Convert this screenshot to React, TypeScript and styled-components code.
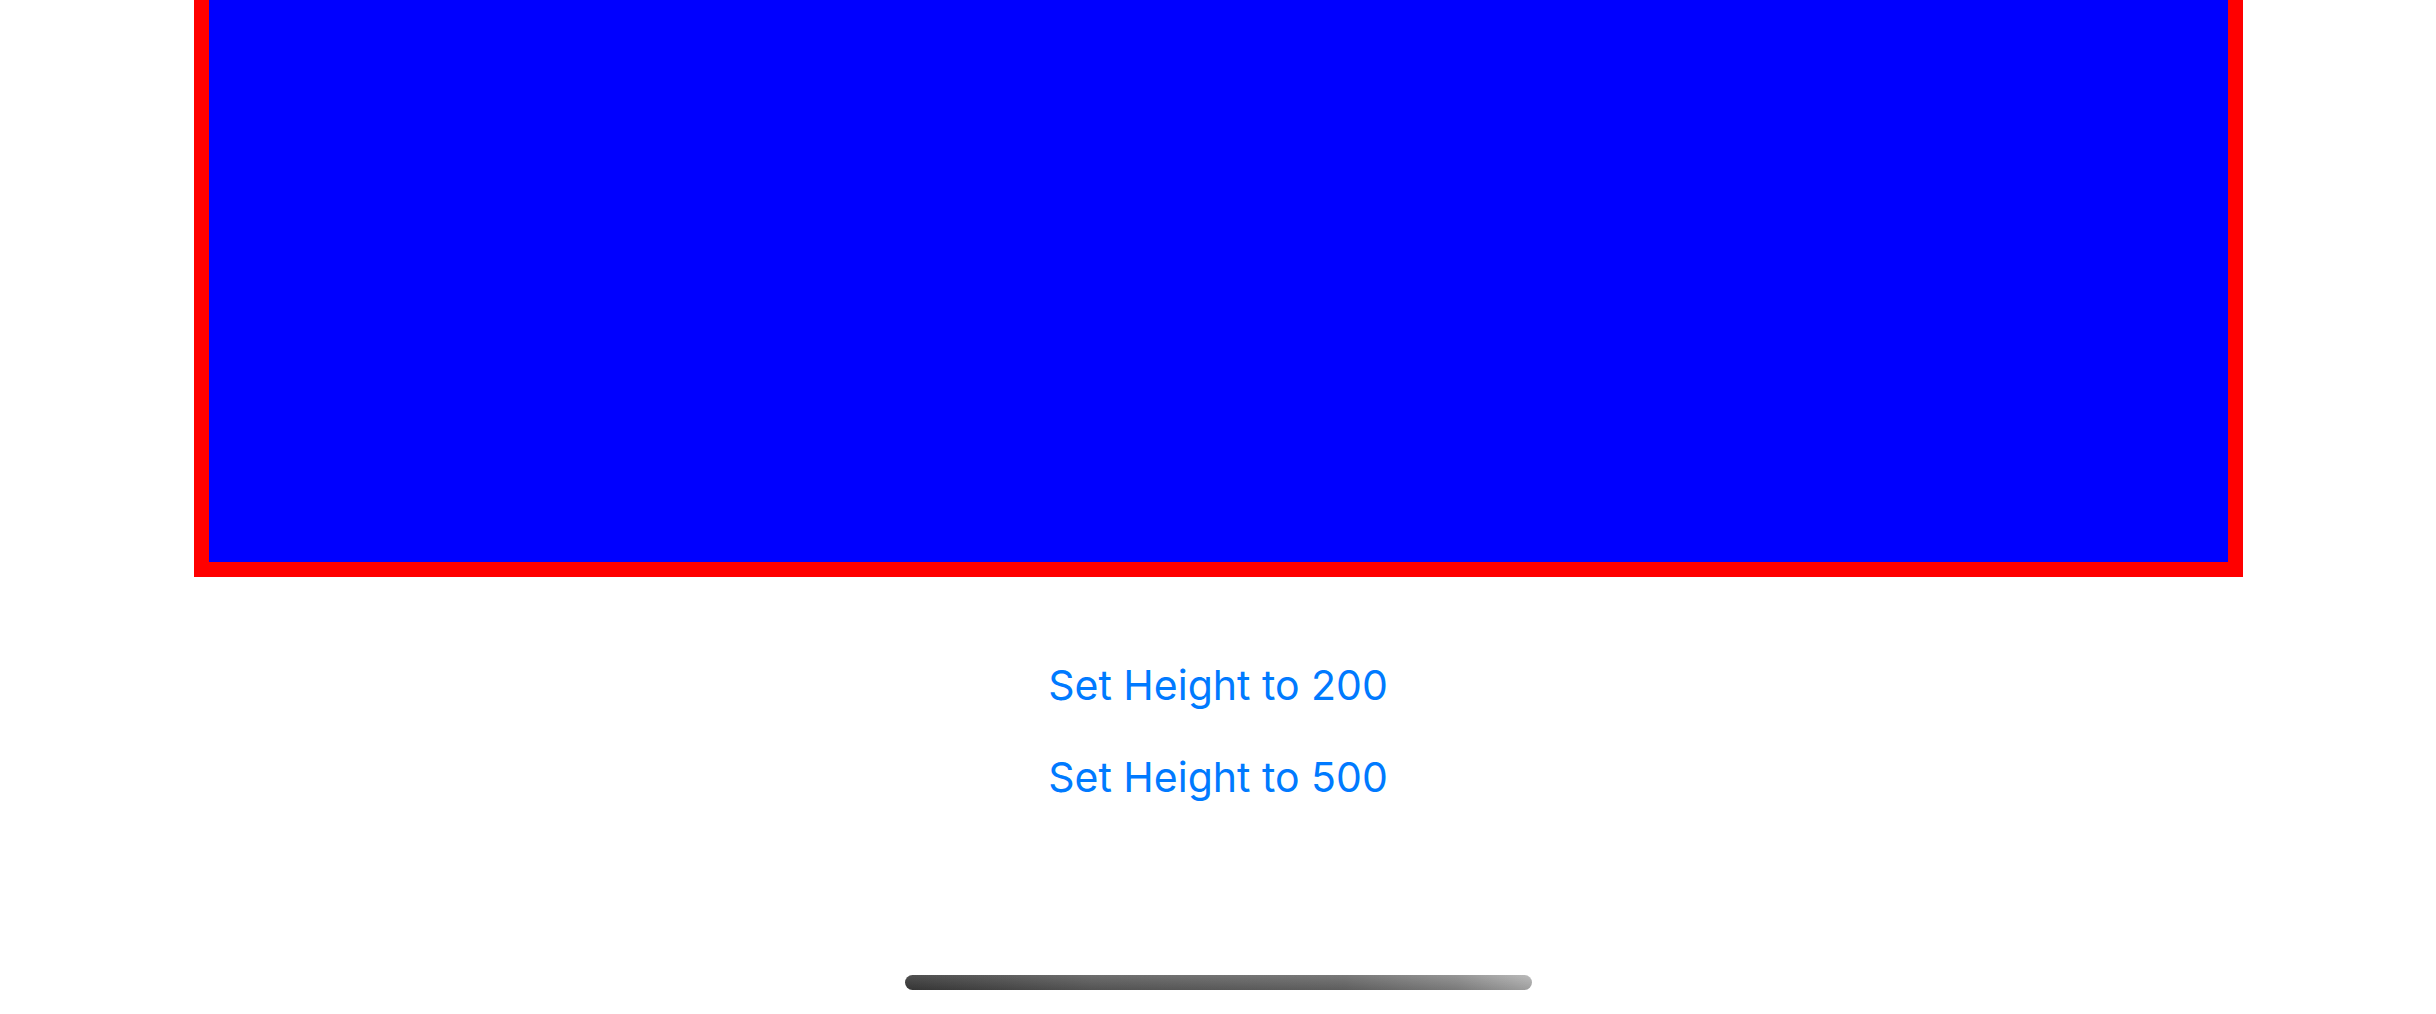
import React from "react";
import styled, { createGlobalStyle } from "styled-components";

const Global = createGlobalStyle`
  html, body { margin: 0; padding: 0; background: #ffffff; }
  body { font-family: Inter, "Noto Sans", sans-serif; }
`;

const Screen = styled.div`
  width: 2436px;
  height: 1014px;
  display: flex;
  flex-direction: column;
  align-items: center;
  overflow: hidden;
  background: #ffffff;
`;

const Frame = styled.div`
  box-sizing: border-box;
  width: 2049px;
  height: 577px;
  flex-shrink: 0;
  background: #0000ff;
  border: 15px solid #ff0000;
  border-top: 0;
`;

const Actions = styled.div`
  display: flex;
  flex-direction: column;
  align-items: center;
  gap: 41px;
  margin-top: 83px;
`;

const LinkButton = styled.button`
  background: none;
  border: 0;
  padding: 0;
  font-family: Inter, "Noto Sans", sans-serif;
  font-size: 41px;
  line-height: 51px;
  letter-spacing: 0;
  color: #007aff;
  cursor: pointer;
`;

const HomeIndicator = styled.div`
  margin-top: auto;
  margin-bottom: 24px;
  width: 627px;
  height: 15px;
  border-radius: 8px;
  background:
    linear-gradient(180deg, rgba(255, 255, 255, 0.1) 0%, rgba(0, 0, 0, 0.12) 100%),
    linear-gradient(90deg, #3c3c3c 0%, #5e5e5e 30%, #6a6a6a 70%, #8a8a8a 88%, #b4b4b4 100%);
`;

export default function App() {
  return (
    <>
      <Global />
      <Screen>
        <Frame />
        <Actions>
          <LinkButton>Set Height to 200</LinkButton>
          <LinkButton>Set Height to 500</LinkButton>
        </Actions>
        <HomeIndicator />
      </Screen>
    </>
  );
}
